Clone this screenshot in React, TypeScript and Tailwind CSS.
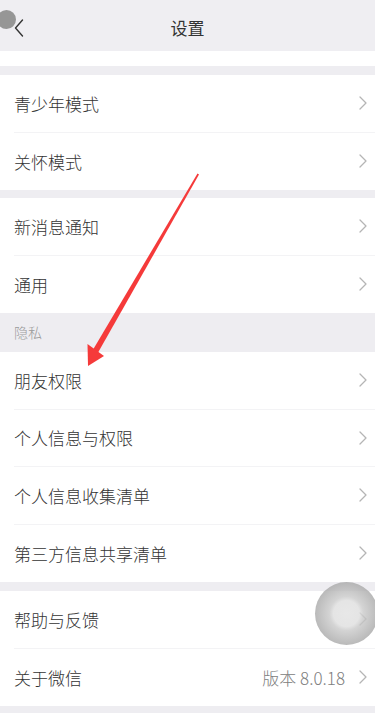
import React from 'react';

const Chevron = () => (
  <svg width="8" height="14" viewBox="0 0 8 14" fill="none" className="shrink-0">
    <path d="M1 1l6 6-6 6" stroke="#b5b5b5" strokeWidth="1.3" strokeLinecap="round" strokeLinejoin="round" />
  </svg>
);

type Item = { label: string; value?: string };

const Row = ({ item, last }: { item: Item; last: boolean }) => (
  <div className="h-[57.5px] pl-[14px] bg-white">
    <div className={`h-full flex items-center pr-[8px] ${last ? '' : 'border-b border-[#f3f3f5]'}`}>
      <span className="flex-1 text-[17px] font-light text-[#333]">{item.label}</span>
      {item.value && <span className="text-[17px] font-light text-[#808080] mr-[14px]">{item.value}</span>}
      <Chevron />
    </div>
  </div>
);

const Group = ({ items }: { items: Item[] }) => (
  <div className="bg-white">
    {items.map((it, i) => (
      <Row key={it.label} item={it} last={i === items.length - 1} />
    ))}
  </div>
);

const App = () => {
  return (
    <div
      className="relative w-[375px] h-[713px] overflow-hidden bg-[#eeedf1]"
      style={{ fontFamily: '"Noto Sans CJK SC", "Noto Sans", sans-serif' }}
    >
      {/* header */}
      <div className="h-[51px] flex items-center justify-center relative bg-[#efeef2]">
        <svg width="10" height="18" viewBox="0 0 10 18" fill="none" className="absolute left-[14px] top-[19px]">
          <path d="M8.5 1L1.5 9l7 8" stroke="#333" strokeWidth="1.4" strokeLinecap="round" strokeLinejoin="round" />
        </svg>
        <span className="text-[17px] text-[#333] pt-[4px]">设置</span>
      </div>
      <div className="h-[15px] bg-white" />
      <div className="h-[9px]" />
      <Group items={[{ label: '青少年模式' }, { label: '关怀模式' }]} />
      <div className="h-[8px]" />
      <Group items={[{ label: '新消息通知' }, { label: '通用' }]} />
      <div className="h-[39px] flex items-end pl-[14px] pb-[9px]">
        <span className="text-[14px] font-light text-[#9a9a9a]">隐私</span>
      </div>
      <Group
        items={[
          { label: '朋友权限' },
          { label: '个人信息与权限' },
          { label: '个人信息收集清单' },
          { label: '第三方信息共享清单' },
        ]}
      />
      <div className="h-[9px]" />
      <Group items={[{ label: '帮助与反馈' }, { label: '关于微信', value: '版本 8.0.18' }]} />

      {/* touch dot top-left */}
      <div className="absolute left-[-3px] top-[10px] w-[19px] h-[19px] rounded-full bg-[#8c8c8c] opacity-90" />

      {/* assistive touch */}
      <div className="absolute left-[315px] top-[582px] w-[63px] h-[63px] rounded-full opacity-80 bg-[radial-gradient(circle,#e2e2e2_0,#dedede_13px,#c9c9c9_17px,#b9b9b9_24px,#a9a9a9_31px)]" />

      {/* red arrow annotation */}
      <svg className="absolute inset-0 pointer-events-none" width="375" height="713" viewBox="0 0 375 713">
        <polygon points="197.5,173.5 199,174.5 97.5,353.5 92.5,350.5" fill="#f53a3a" />
        <polygon points="88,366 87.5,344 104,356" fill="#f53a3a" />
      </svg>
    </div>
  );
};

export default App;
